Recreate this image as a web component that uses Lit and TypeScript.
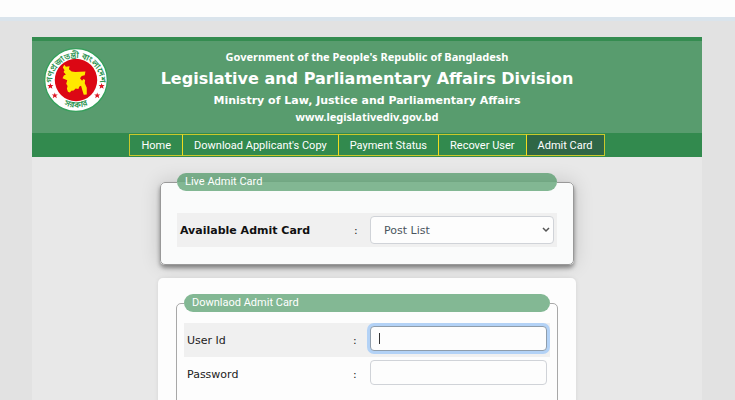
import { LitElement, html, css, svg } from "lit";
import { customElement, property } from "lit/decorators.js";
import { classMap } from "lit/directives/class-map.js";

@customElement("state-emblem")
class StateEmblem extends LitElement {
  static styles = css`
    :host { display: block; width: 64px; height: 64px; }
    .seal { display: block; width: 100%; height: 100%; }
    .ring { font-family: "Noto Sans Bengali", "Noto Sans", sans-serif; font-size: 25px; font-weight: 600; fill: #2c9350; }
  `;

  render() {
    const stars = [[61, 169], [74, 197], [213, 169], [200, 197]];
    return html`<svg class="seal" viewBox="42 56 190 190" role="img" aria-label="Government seal of Bangladesh">
      <circle cx="137" cy="151" r="93" fill="#fff" stroke="#35a05b" stroke-width="4" />
      <circle cx="137" cy="151" r="63" fill="#dc0714" />
      <path fill="#ffe800" d="M102 106l5 6 11-2-2 9 8 7 11 1 30-1-2 11-9 2-5 7 6 7 4-5 5 3-1 10 6 13v20l-9 1-4-13-4-14-5 2-3 8-8-2-6 6-7 1-4 5-6-2-3-9 2-8-4-7 3-10-14-6 4-8 6-3-7-8 3-5-5-8z" />
      <path id="upper" d="M66 157a71 71 0 1 1 142 0" fill="none" />
      <path id="lower" d="M79 209a82 82 0 0 0 116 0" fill="none" />
      <text class="ring"><textPath href="#upper" startOffset="50%" text-anchor="middle">গণপ্রজাতন্ত্রী বাংলাদেশ</textPath></text>
      <text class="ring"><textPath href="#lower" startOffset="50%" text-anchor="middle">সরকার</textPath></text>
      ${stars.map(([x, y]) => svg`<path fill="#dc1420" transform="translate(${x} ${y})" d="M0-9l2 6h7l-5 4 2 7-6-4-6 4 2-7-5-4h7z" />`)}
    </svg>`;
  }
}

@customElement("form-panel")
class FormPanel extends LitElement {
  @property() heading = "";
  @property({ type: Boolean }) raised = false;

  static styles = css`
    :host { display: block; }
    .panel { margin: 0; min-width: 0; border: 1px solid #a8a8a8; border-radius: 5px; padding: 11px 7px 40px; }
    .raised { padding: 22px 16px 17px; border-color: #999; background: #fafbfb; box-shadow: 0 3px 4px rgba(0, 0, 0, 0.4), 0 0 20px rgba(0, 0, 0, 0.16); }
    .heading { box-sizing: border-box; width: 100%; height: 18px; padding: 0 8px; border-radius: 9px; background: rgba(50, 138, 78, 0.6); color: #fff; font: 400 11px/18px Roboto, sans-serif; }
  `;

  render() {
    return html`<fieldset class=${classMap({ panel: true, raised: this.raised })}>
      <legend class="heading">${this.heading}</legend>
      <slot></slot>
    </fieldset>`;
  }
}

@customElement("app-root")
class AppRoot extends LitElement {
  static styles = css`
    :host { display: flex; flex-direction: column; height: 100vh; overflow: hidden; background: #e2e2e2; font-family: "DejaVu Sans", sans-serif; color: #222; }
    * { box-sizing: border-box; }
    .topbar { flex: none; height: 21px; background: #fdfdfd; border-bottom: 4px solid #dae4ec; }
    .page { flex: 1 0 auto; margin: 16px 33px 0 32px; background: #e8e8e8; }
    .banner { display: grid; grid-template-columns: 88px 1fr 88px; height: 96px; border-top: 4px solid #348c50; background: #589c6e; }
    .emblem { margin: 7px 0 0 12px; }
    .titles { display: flex; flex-direction: column; align-items: center; padding-top: 8px; color: #fff; white-space: nowrap; }
    .titles p, .titles h1, .titles h2 { margin: 0; font-weight: 700; }
    .titles p { font-family: "Noto Sans", sans-serif; font-size: 11px; line-height: 16px; }
    .titles h1 { font-size: 16px; line-height: 28px; }
    .titles h2 { font-size: 11px; line-height: 16px; }
    .nav { display: flex; justify-content: center; height: 24px; padding: 1px 0; background: #328a4e; }
    .link { padding: 0 11px; border: 1px solid #c9c82c; border-left-width: 0; color: #fff; font: 400 11px/22px Roboto, sans-serif; text-decoration: none; white-space: nowrap; }
    .link:first-child { border-left-width: 1px; }
    .link:not(:last-child) { border-right-color: #f0dc20; }
    .current { background: #2f6646; }
    .forms { width: 418px; margin: 16px auto 0; }
    .live { margin: 0 2px; }
    .card { margin-top: 13px; padding: 16px 18px; border-radius: 5px; background: #fdfdfd; box-shadow: 0 0 4px rgba(0, 0, 0, 0.08); }
    .row { display: grid; grid-template-columns: 1fr 16px 184px; align-items: center; height: 34px; padding: 0 3px; font-size: 11px; }
    .shaded { background: #f0f0f0; }
    .strong { font-weight: 700; color: #111; }
    .select, .input { width: 100%; border: 1px solid #d0d3d8; border-radius: 4px; background-color: #fdfdfd; font: 11px "DejaVu Sans", sans-serif; color: #4b555e; }
    .picker { position: relative; }
    .select { display: block; height: 28px; padding: 0 13px; appearance: none; }
    .arrow { position: absolute; right: 4px; top: 11px; width: 8px; height: 6px; pointer-events: none; }
    .compact { grid-template-columns: 1fr 17px 177px; }
    .entry { position: relative; margin-bottom: 3px; }
    .input { display: block; height: 25px; padding: 0 9px; outline: none; }
    .active { border-color: #8f9dab; box-shadow: 0 0 0 3px #b3d2f6; }
    .caret { position: absolute; left: 9px; top: 7px; width: 1px; height: 11px; background: #333; }
  `;

  links = ["Home", "Download Applicant's Copy", "Payment Status", "Recover User", "Admit Card"];

  render() {
    return html`
      <div class="topbar"></div>
      <main class="page">
        <header class="banner">
          <state-emblem class="emblem"></state-emblem>
          <div class="titles">
            <p>Government of the People's Republic of Bangladesh</p>
            <h1>Legislative and Parliamentary Affairs Division</h1>
            <h2>Ministry of Law, Justice and Parliamentary Affairs</h2>
            <p>www.legislativediv.gov.bd</p>
          </div>
        </header>
        <nav class="nav">
          ${this.links.map((name) => html`<a href="#" class=${classMap({ link: true, current: name === "Admit Card" })}>${name}</a>`)}
        </nav>
        <div class="forms">
          <form-panel class="live" raised heading="Live Admit Card">
            <div class="row shaded">
              <label class="strong" for="post">Available Admit Card</label>
              <span>:</span>
              <div class="picker">
                <select class="select" id="post"><option>Post List</option></select>
                <svg class="arrow" viewBox="0 0 8 6"><path d="M1 1l3 3 3-3" fill="none" stroke="#555" stroke-width="1.5" /></svg>
              </div>
            </div>
          </form-panel>
          <section class="card">
            <form-panel heading="Downlaod Admit Card">
              <div class="row compact shaded">
                <label for="user">User Id</label>
                <span>:</span>
                <div class="entry"><input class="input active" id="user" type="text" /><i class="caret"></i></div>
              </div>
              <div class="row compact">
                <label for="pass">Password</label>
                <span>:</span>
                <div class="entry"><input class="input" id="pass" type="password" /></div>
              </div>
            </form-panel>
          </section>
        </div>
      </main>
    `;
  }
}
